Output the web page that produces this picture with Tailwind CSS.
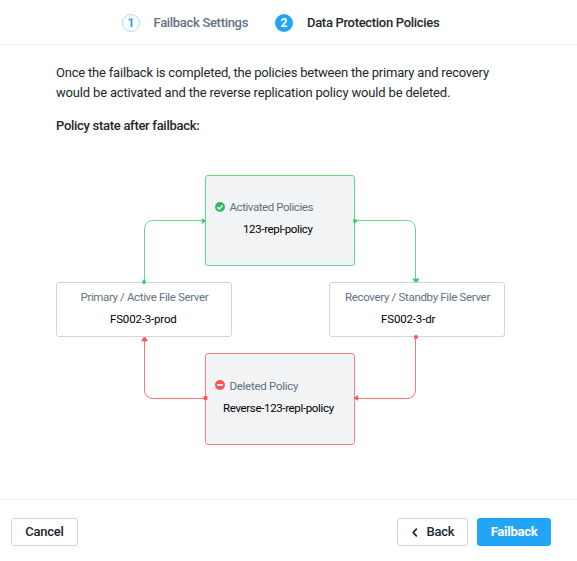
<!DOCTYPE html>
<html lang="en">
<head>
<meta charset="utf-8">
<title>Failback</title>
<script src="https://cdn.jsdelivr.net/npm/@tailwindcss/browser@4"></script>
</head>
<body class="flex h-[561px] w-[577px] flex-col overflow-hidden bg-white font-['Roboto',sans-serif] text-[13px] leading-5 text-[#22272e]">
  <header class="flex h-[45px] shrink-0 items-center border-b border-[#f2f3f5] pt-px pl-[122px] whitespace-nowrap">
    <span class="flex size-[18px] items-center justify-center rounded-full border border-[#a7dafc] text-[12px] font-bold text-[#22a5f7]">1</span>
    <span class="ml-[13.5px] w-[94.5px] font-medium tracking-[-0.31px] text-[#627280]">Failback Settings</span>
    <span class="ml-[27px] flex size-[18px] items-center justify-center rounded-full bg-[#22a5f7] text-[12px] font-bold text-white">2</span>
    <span class="ml-[14px] font-medium tracking-[-0.31px]">Data Protection Policies</span>
  </header>
  <main class="relative flex-1 pt-[18px] pl-[56px]">
    <p class="tracking-[-0.2px] whitespace-nowrap">Once the failback is completed, the policies between the primary and recovery<br><span class="tracking-[-0.17px]">would be activated and the reverse replication policy would be deleted.</span></p>
    <p class="mt-[13px] font-medium tracking-[-0.29px]">Policy state after failback:</p>
    <section class="absolute top-[130px] left-[56px] h-[270px] w-[449px] text-[11.5px] leading-4 text-black">
      <div class="absolute top-0 left-[149px] flex h-[91px] w-[150px] flex-col rounded-[3px] border border-[#64d98c] bg-[#f2f3f5] pt-[23px]">
        <div class="flex items-center pl-[9px] text-[#627280]">
          <svg class="mr-[4.5px] size-[10px]" viewBox="0 0 10 10"><circle cx="5" cy="5" r="5" fill="#36b96b"/><path d="M2.4 5.2 4.3 7 7.6 3.4" fill="none" stroke="#fff" stroke-width="1.4"/></svg>
          <span class="tracking-[-0.43px]">Activated Policies</span>
        </div>
        <div class="mt-[6px] pl-[37px] tracking-[-0.36px]">123-repl-policy</div>
      </div>
      <div class="absolute top-[107px] left-0 h-[55px] w-[176px] rounded-[3px] border border-[#d1d5de] bg-white pt-[6px] whitespace-nowrap">
        <div class="pl-[23.5px] tracking-[-0.37px] text-[#627280]">Primary / Active File Server</div>
        <div class="mt-[6px] pl-[53px] tracking-[-0.17px]">FS002-3-prod</div>
      </div>
      <div class="absolute top-[107px] left-[273px] h-[55px] w-[176px] rounded-[3px] border border-[#d1d5de] bg-white pt-[6px] whitespace-nowrap">
        <div class="pl-[15px] tracking-[-0.33px] text-[#627280]">Recovery / Standby File Server</div>
        <div class="mt-[6px] pl-[51px] tracking-[-0.15px]">FS002-3-dr</div>
      </div>
      <div class="absolute top-[178px] left-[149px] flex h-[92px] w-[150px] flex-col rounded-[3px] border border-[#f97f7f] bg-[#f2f3f5] pt-[24px]">
        <div class="flex items-center pl-[9px] text-[#627280]">
          <svg class="relative -top-px mr-[4.5px] size-[10px]" viewBox="0 0 10 10"><circle cx="5" cy="5" r="5" fill="#f95454"/><path d="M2 5h6" stroke="#fff" stroke-width="1.6"/></svg>
          <span class="tracking-[-0.28px]">Deleted Policy</span>
        </div>
        <div class="mt-[6px] pl-[17px] tracking-[-0.35px]">Reverse-123-repl-policy</div>
      </div>
      <svg class="absolute inset-0 overflow-visible" width="449" height="270" viewBox="56 175 449 270" fill="none">
        <g stroke="#64d98c"><path d="M144.5 282V228.500A8 8 0 0 1 152.500 220.500H203"/><path d="M355 220.500H407.500A8 8 0 0 1 415.500 228.500V280"/></g>
        <g fill="#36cf6b"><circle cx="144" cy="282" r="2"/><circle cx="355" cy="221" r="2"/><path d="m202 218 4 3-4 3ZM412.500 278.500h7l-2 3.500h-3Z"/></g>
        <g stroke="#fa7777"><path d="M205 398.500H152.500A8 8 0 0 1 144.500 390.500V340"/><path d="M415.500 337V390.500A8 8 0 0 1 407.500 398.500H357"/></g>
        <g fill="#fa5555"><circle cx="205.500" cy="398" r="2.200"/><circle cx="416" cy="337" r="2.100"/><path d="M141 341.200h7l-2.500-4h-2ZM358 395l-4 3 4 3Z"/></g>
      </svg>
    </section>
  </main>
  <footer class="flex h-[62px] shrink-0 items-start border-t border-[#f2f3f5] pt-[18px] pr-[26px] pl-[11px] font-medium tracking-[-0.25px]">
    <button class="h-[28px] w-[67px] rounded-[3px] border border-[#d1d5de]">Cancel</button>
    <button class="ml-auto flex h-[28px] w-[71px] items-center rounded-[3px] border border-[#d1d5de] pl-[14px]">
      <svg class="mr-[8.5px] h-[9px] w-[6px]" viewBox="0 0 6 9"><path d="M4.800.700 1.300 4.500 4.800 8.300" fill="none" stroke="#22272e" stroke-width="1.700"/></svg>Back
    </button>
    <button class="ml-[9px] h-[28px] w-[74px] rounded-[3px] bg-[#22a5f7] font-bold text-white">Failback</button>
  </footer>
</body>
</html>
